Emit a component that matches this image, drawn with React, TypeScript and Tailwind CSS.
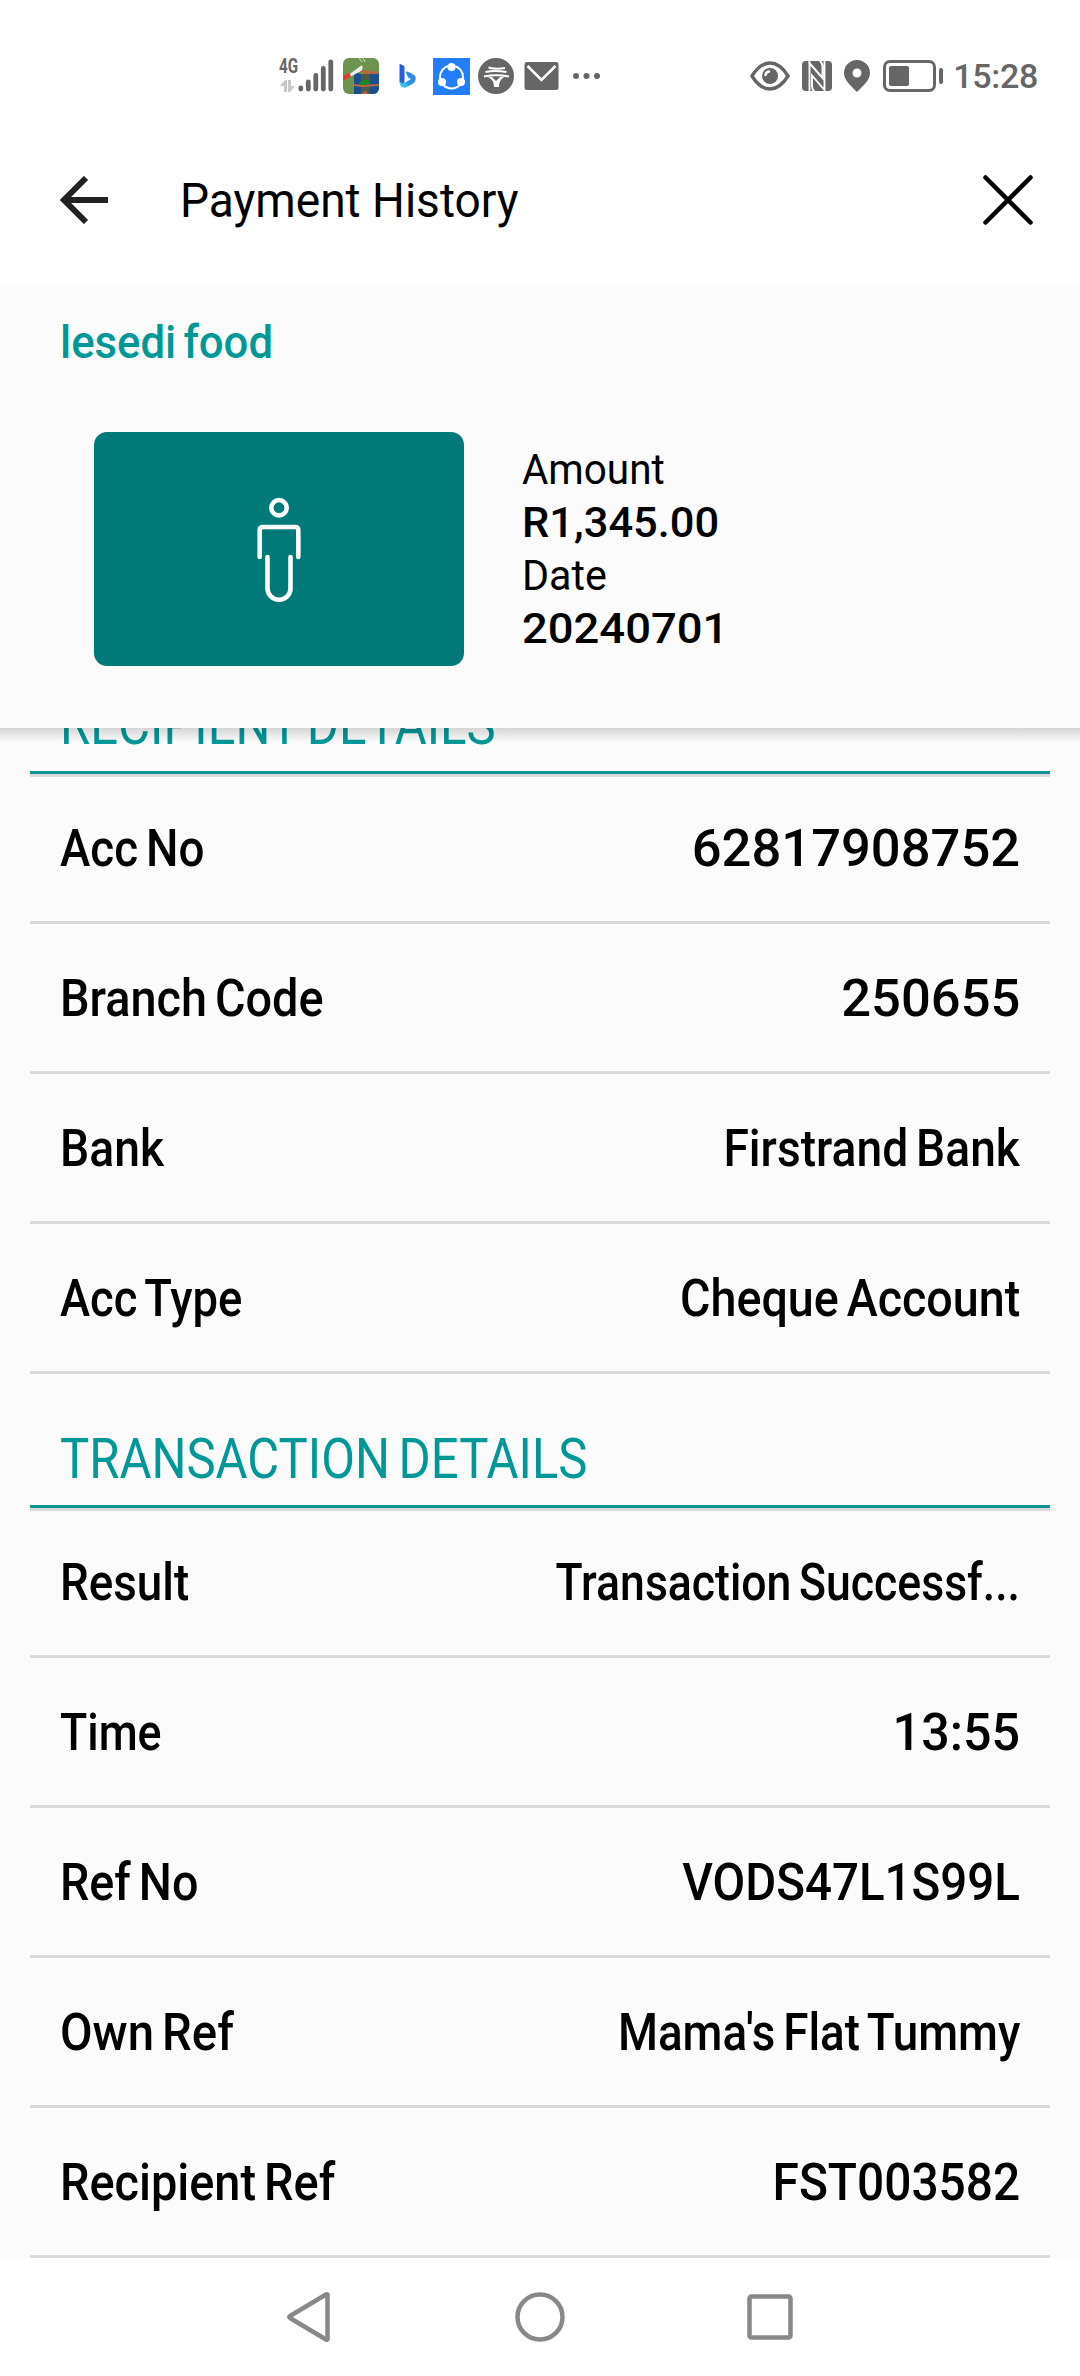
import React from 'react';
import clsx from 'clsx';

type RowItem = {
  label: string;
  value: string;
  labelFit: string;
  valueFit: string;
};

const recipientRows: RowItem[] = [
  { label: 'Acc No', value: '62817908752', labelFit: 'scale-x-[0.88]', valueFit: 'scale-x-[1.01]' },
  { label: 'Branch Code', value: '250655', labelFit: 'scale-x-[0.9]', valueFit: 'scale-x-[1.01]' },
  { label: 'Bank', value: 'Firstrand Bank', labelFit: 'scale-x-[0.89]', valueFit: 'scale-x-[0.888]' },
  { label: 'Acc Type', value: 'Cheque Account', labelFit: 'scale-x-[0.873]', valueFit: 'scale-x-[0.897]' },
];

const transactionRows: RowItem[] = [
  { label: 'Result', value: 'Transaction Successf...', labelFit: 'scale-x-[0.88]', valueFit: 'scale-x-[0.857]' },
  { label: 'Time', value: '13:55', labelFit: 'scale-x-[0.86]', valueFit: 'scale-x-[0.965]' },
  { label: 'Ref No', value: 'VODS47L1S99L', labelFit: 'scale-x-[0.897]', valueFit: 'scale-x-[0.913]' },
  { label: 'Own Ref', value: "Mama's Flat Tummy", labelFit: 'scale-x-[0.909]', valueFit: 'scale-x-[0.88]' },
  { label: 'Recipient Ref', value: 'FST003582', labelFit: 'scale-x-[0.901]', valueFit: 'scale-x-[0.92]' },
];

export default function App() {
  return (
    <div className="flex h-[2376px] w-[1080px] flex-col overflow-hidden bg-white font-['Roboto',sans-serif] text-black">
      <StatusBar />

      <header className="flex h-[168px] items-center pr-[46px] pl-[60px]">
        <button aria-label="Back">
          <svg className="h-12 w-12" viewBox="0 0 48 48" fill="none" stroke="#212121" strokeWidth="6">
            <path d="M26 2L4 24l22 22M4 24h44" />
          </svg>
        </button>
        <h1 className="ml-[72px] origin-left scale-x-[0.94] text-[49px] leading-none whitespace-nowrap">Payment History</h1>
        <button aria-label="Close" className="ml-auto">
          <svg className="h-[52px] w-[52px]" viewBox="0 0 52 52" fill="none" stroke="#000" strokeWidth="4.5" strokeLinecap="round">
            <path d="M3.5 3.5l45 45M48.5 3.5l-45 45" />
          </svg>
        </button>
      </header>

      <section className="relative z-10 h-[444px] shrink-0 bg-[#fbfbfb] pt-[33px]">
        <h2 className="ml-[60px] w-fit origin-left scale-x-[0.93] text-[47px] leading-[50px] font-medium [word-spacing:-4px] text-[#009797]">
          lesedi food
        </h2>
        <div className="mt-[65px] flex items-center pl-[94px]">
          <div className="flex h-[234px] w-[370px] items-center justify-center rounded-[13px] bg-[#007a79]">
            <PersonIcon />
          </div>
          <dl className="ml-[58px] text-[43px] leading-[53px]">
            <dt className="w-fit origin-left scale-x-[0.94]">Amount</dt>
            <dd className="w-fit origin-left scale-x-[1.01] font-medium">R1,345.00</dd>
            <dt className="w-fit origin-left scale-x-[0.96]">Date</dt>
            <dd className="w-fit origin-left scale-x-[1.055] font-medium">20240701</dd>
          </dl>
        </div>
        {/* Shadow cast on the scrolled list */}
        <div className="absolute inset-x-0 top-full h-[14px] bg-linear-to-b from-black/15 to-transparent" />
      </section>

      <main className="min-h-0 flex-1 overflow-hidden bg-[#fbfbfb] px-[30px]">
        <div className="-mt-[88px]">
          <DetailSection title="RECIPIENT DETAILS" rows={recipientRows} />
          <DetailSection title="TRANSACTION DETAILS" rows={transactionRows} />
        </div>
      </main>

      <NavigationBar />
    </div>
  );
}

function DetailSection({ title, rows }: { title: string; rows: RowItem[] }) {
  return (
    <section>
      <div className="relative flex h-[134px] items-end border-b-[3px] border-[#0f9494] pb-[18px] pl-[30px] shadow-[0_3px_0_#d9d9d9]">
        <h3 className="origin-left scale-x-[0.876] text-[56px] leading-none [word-spacing:-4px] whitespace-nowrap text-[#009797]">
          {title}
        </h3>
      </div>
      {rows.map((row) => (
        <DetailRow key={row.label} {...row} />
      ))}
    </section>
  );
}

function DetailRow({ label, value, labelFit, valueFit }: RowItem) {
  const textClasses = 'text-[52px] leading-none font-medium whitespace-nowrap [word-spacing:-4px]';

  return (
    <div className="flex h-[150px] items-center justify-between border-b-[3px] border-[#d9d9d9] px-[30px] pt-[2px]">
      <span className={clsx(textClasses, 'origin-left', labelFit)}>{label}</span>
      <span className={clsx(textClasses, 'origin-right', valueFit)}>{value}</span>
    </div>
  );
}

function PersonIcon() {
  return (
    <svg className="h-[106px] w-[46px]" viewBox="0 0 46 106" fill="none" stroke="#fff" strokeWidth="4.6" strokeLinecap="round">
      <circle cx="23" cy="11.7" r="7.7" />
      <path d="M3.7 61V34.2q0-3.200 3.200-3.200h32.200q3.200 0 3.200 3.200V61" />
      <path d="M11.500 61v31.200a11.500 11.500 0 0 0 23 0V61" />
    </svg>
  );
}

function StatusBar() {
  return (
    <div className="flex h-[116px] shrink-0 items-center pt-9 pl-[279px] text-[#666]">
      <div className="flex h-9 w-[19px] flex-col justify-between">
        <span className="origin-left scale-x-[0.76] text-[20px] leading-[16px] font-bold">4G</span>
        <svg className="mb-[2px] h-3 w-[17px]" viewBox="0 0 17 12" fill="#c8c8c8">
          <path d="M1 6l5-6h2v12H5V6zM9 0h3v6h4l-5 6H9z" />
        </svg>
      </div>
      <svg className="h-9 w-9" viewBox="0 0 36 36" stroke="currentColor" strokeWidth="4.8" strokeLinecap="round">
        <path d="M2.800 30v1M10.300 24v7M17.800 17.500V31M25.300 10.500V31M32.800 4v27" />
      </svg>
      <AppThumbnail />
      <svg className="ml-[19px] h-[26px] w-[20px]" viewBox="0 0 20 26">
        <defs>
          <linearGradient id="bing" x1="0" y1="1" x2="1" y2="0">
            <stop offset="0" stopColor="#3fe0dc" />
            <stop offset="0.5" stopColor="#2a8ff0" />
            <stop offset="1" stopColor="#2f7fee" />
          </linearGradient>
        </defs>
        <path d="M2 1l3.500 1.500q1 .5 1 2V19l-2 3.500-3-3.500V1.500z" fill="#1f5fe0" />
        <path d="M1.500 18.500l4 2 7.500-4.500-3-1.500-2-5q0-1.500 1.500-1l5 2.500q4 2 3 6-.5 2.500-3 4L8 24.500q-6 1.500-6.500-6z" fill="url(#bing)" />
      </svg>
      <svg className="ml-[15px] h-[37px] w-[37px]" viewBox="0 0 37 37">
        <path fill="#247cff" d="M0 0h37v37H0z" />
        <circle cx="18.500" cy="19" r="11.500" fill="none" stroke="#fff" strokeWidth="2" strokeDasharray="19 5" strokeDashoffset="-8" />
        <circle cx="18.500" cy="9" r="4" fill="#fff" />
        <circle cx="9" cy="24" r="4" fill="#fff" />
        <circle cx="28" cy="24" r="4" fill="#fff" />
      </svg>
      <svg className="ml-2 h-9 w-9" viewBox="0 0 36 36" fill="none" stroke="#fff">
        <circle cx="18" cy="18" r="18" fill="#666" stroke="none" />
        <path strokeWidth="2" d="M10.500 9.500q6 2 16.500.5M7.500 14q9-2 21 0M6 18.500q12-2.500 25 0" />
        <path fill="#fff" stroke="none" d="M9 18.500l5 .5 4 4 4-4 5-.5q-6 3-6 10.500h-5q0-7.500-7-10.500z" />
      </svg>
      <svg className="ml-[10px] h-7 w-[35px]" viewBox="0 0 35 28">
        <rect x="0.5" width="34" height="28" rx="2.5" fill="#666" />
        <path d="M3.500 4L17.500 18 31.500 4" fill="none" stroke="#fff" strokeWidth="2.5" />
      </svg>
      <svg className="ml-[14px] h-[6px] w-7" viewBox="0 0 28 6" fill="currentColor">
        <circle cx="3" cy="3" r="3" />
        <circle cx="13.500" cy="3" r="3" />
        <circle cx="24" cy="3" r="3" />
      </svg>

      <div className="ml-auto flex items-center pr-[42px]">
        <svg className="h-[30px] w-[40px]" viewBox="0 0 40 30">
          <path d="M2 15Q10 2 20 2t18 13Q30 28 20 28T2 15z" fill="none" stroke="currentColor" strokeWidth="3.4" />
          <circle cx="20" cy="15" r="8" fill="currentColor" />
          <path d="M15.500 14q.5-3 3.500-3.500" fill="none" stroke="#fff" strokeWidth="2.5" strokeLinecap="round" />
        </svg>
        {/* NFC */}
        <svg className="ml-3 h-[30px] w-[30px]" viewBox="0 0 30 30">
          <rect width="30" height="30" rx="4" fill="currentColor" />
          <path d="M7.500 30V0M6.500 1l14 16V6q0-4-2.500-6M22.500 0v29L10 14.500V25q0 4 2.500 5" fill="none" stroke="#fff" strokeWidth="1.900" />
        </svg>
        <svg className="ml-3 h-8 w-[26px]" viewBox="0 0 26 32">
          <path
            fillRule="evenodd"
            fill="currentColor"
            d="M13 0a13 13 0 0 1 13 13c0 7-6 12-13 19C6 25 0 20 0 13A13 13 0 0 1 13 0zm0 8.500a4.500 4.500 0 1 0 0 9 4.500 4.500 0 0 0 0-9z"
          />
        </svg>
        <svg className="ml-[13px] h-8 w-[61px]" viewBox="0 0 61 32">
          <rect x="1.500" y="1.500" width="50" height="29" rx="5.500" fill="none" stroke="currentColor" strokeWidth="3" />
          <rect x="6" y="6" width="20" height="20" rx="2" fill="currentColor" />
          <rect x="56" y="8" width="4" height="16" rx="2" fill="currentColor" />
        </svg>
        <span className="ml-[9px] text-[34px] leading-none font-medium tracking-[-0.3px]">15:28</span>
      </div>
    </div>
  );
}

// Game thumbnail: a knife above a shelf on a green background
function AppThumbnail() {
  return (
    <svg className="ml-[9px] h-9 w-9 rounded-[6px]" viewBox="0 0 36 36">
      <path fill="#6c944e" d="M0 0h36v36H0z" />
      <path fill="#1d4f8c" d="M11 14l7 2v20h-7zM27 15h9v21h-9z" />
      <path fill="#4a5a46" d="M18 16h9v20h-9z" />
      <path fill="#b9683d" d="M15 13l5-1 15 2v2H22zM11 26l8 1 17-1v2l-17 1-8-1z" />
      <path fill="#178a22" d="M16 25l4-3h5l2 4-11 1z" />
      <path fill="#c4603c" d="M18 36l4-3 4 3z" />
      <path fill="#ececec" d="M6 16.500L19 7q2 4-2 6.500l-9 5z" />
      <path stroke="#e23b2c" strokeWidth="4" d="M0 20.500l7-4" />
      <path stroke="#d5e2cb" strokeWidth="1" fill="none" d="M16 0l3 4M20 0l2 4" />
    </svg>
  );
}

function NavigationBar() {
  return (
    <nav className="flex h-[118px] shrink-0 items-center justify-between pr-[287px] pl-[286px] text-[#888]">
      <svg className="h-[52px] w-[46px]" viewBox="0 0 46 52" fill="none" stroke="currentColor" strokeWidth="4.5" strokeLinejoin="round">
        <path d="M41.500 3.500v45Q41 49 40 48.500L4 27q-1.500-1 0-2L40 3.500q1-.5 1.500 0z" />
      </svg>
      <svg className="h-[50px] w-[50px]" viewBox="0 0 50 50" fill="none" stroke="currentColor" strokeWidth="4.5">
        <circle cx="25" cy="25" r="22.5" />
      </svg>
      <svg className="h-[46px] w-[46px]" viewBox="0 0 46 46" fill="none" stroke="currentColor" strokeWidth="4.5">
        <rect x="2.500" y="2.500" width="41" height="41" rx="2" />
      </svg>
    </nav>
  );
}
